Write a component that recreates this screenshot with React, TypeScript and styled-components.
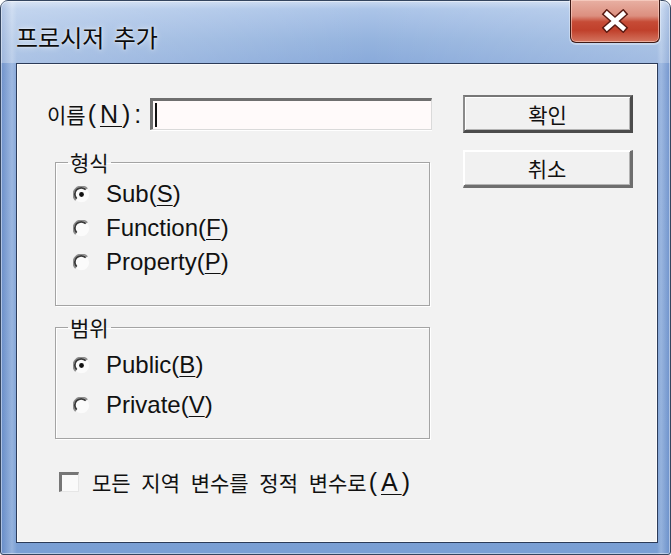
import styled, { createGlobalStyle } from "styled-components";

const KO = `"Noto Sans CJK KR", "Liberation Sans", sans-serif`;
const LATIN = `"Liberation Sans", "Noto Sans CJK KR", sans-serif`;

const GlobalStyle = createGlobalStyle`
  html, body {
    margin: 0;
    padding: 0;
    background: #ffffff;
  }
  body {
    width: 671px;
    height: 555px;
    overflow: hidden;
  }
`;

type RadioProps = { checked?: boolean };

/**
 * 클래식 윈도우 라디오 버튼 모양
 */
const RadioMark: React.FC<RadioProps> = ({ checked }) => (
  <svg width="17" height="17" viewBox="0 0 12 12">
    <circle cx="6" cy="6" r="5.4" fill="#fbfbfb" />
    <path d="M1.9 10.1 A5.6 5.6 0 0 1 10.1 1.9" stroke="#8e8e8e" strokeWidth="1.1" fill="none" />
    <path d="M2.6 9.0 A4.5 4.5 0 0 1 9.0 2.6" stroke="#3a3a3a" strokeWidth="1.3" fill="none" />
    {checked && <circle cx="6" cy="6" r="1.7" fill="#111" />}
  </svg>
);

const CloseGlyph = () => (
  <svg width="30" height="24" viewBox="0 0 30 24">
    <path d="M7 5 L23 19 M23 5 L7 19" stroke="#5a1a12" strokeWidth="7.5" strokeLinecap="square" />
    <path d="M7 5 L23 19 M23 5 L7 19" stroke="#ffffff" strokeWidth="4.5" strokeLinecap="square" />
  </svg>
);

export default function App() {
  return (
    <>
      <GlobalStyle />
      <Window>
        <TitleBar>
          <Title>프로시저 추가</Title>
          <CloseButton aria-label="닫기">
            <CloseGlyph />
          </CloseButton>
        </TitleBar>
        <Client>
          <LeftColumn>
            <NameRow>
              <Label>
                <Ko>이름</Ko>
                <Latin>
                  (<Mnemonic>N</Mnemonic>):
                </Latin>
              </Label>
              <NameInput>
                <Caret />
              </NameInput>
            </NameRow>

            <Group $pad="2px 0 26px 0">
              <GroupLegend>형식</GroupLegend>
              <OptionList>
                <OptionRow $pitch={34}>
                  <RadioMark checked />
                  <OptionText>
                    Sub(<Mnemonic>S</Mnemonic>)
                  </OptionText>
                </OptionRow>
                <OptionRow $pitch={34}>
                  <RadioMark />
                  <OptionText>
                    Function(<Mnemonic>F</Mnemonic>)
                  </OptionText>
                </OptionRow>
                <OptionRow $pitch={34}>
                  <RadioMark />
                  <OptionText>
                    Property(<Mnemonic>P</Mnemonic>)
                  </OptionText>
                </OptionRow>
              </OptionList>
            </Group>

            <Group $pad="5px 0 13px 0" $gap={8}>
              <GroupLegend>범위</GroupLegend>
              <OptionList>
                <OptionRow $pitch={40}>
                  <RadioMark checked />
                  <OptionText>
                    Public(<Mnemonic>B</Mnemonic>)
                  </OptionText>
                </OptionRow>
                <OptionRow $pitch={40}>
                  <RadioMark />
                  <OptionText>
                    Private(<Mnemonic>V</Mnemonic>)
                  </OptionText>
                </OptionRow>
              </OptionList>
            </Group>

            <CheckRow>
              <CheckBox />
              <CheckText>
                <Ko>모든 지역 변수를 정적 변수로</Ko>
                <Latin>
                  (<Mnemonic>A</Mnemonic>)
                </Latin>
              </CheckText>
            </CheckRow>
          </LeftColumn>

          <ButtonColumn>
            <DialogButton $default>확인</DialogButton>
            <DialogButton>취소</DialogButton>
          </ButtonColumn>
        </Client>
      </Window>
    </>
  );
}

const Window = styled.div`
  box-sizing: border-box;
  width: 671px;
  height: 555px;
  display: flex;
  flex-direction: column;
  padding: 0 12px 11px 15px;
  border: 1px solid #34455f;
  border-radius: 8px 8px 3px 3px;
  background:
    linear-gradient(90deg, rgba(40, 80, 160, 0.25) 0, rgba(255, 255, 255, 0.2) 11px, rgba(255, 255, 255, 0) 16px),
    linear-gradient(270deg, rgba(40, 80, 160, 0.2) 0, rgba(255, 255, 255, 0.2) 9px, rgba(255, 255, 255, 0) 13px),
    linear-gradient(180deg, #c9d9f0 0, #abc4e8 8px, #94b3de 40px, #86a7d9 70px, #7a9fd4 100%);
  box-shadow: inset 0 0 0 1px rgba(255, 255, 255, 0.45);
`;

const TitleBar = styled.div`
  height: 62px;
  display: flex;
  justify-content: space-between;
  align-items: flex-start;
  margin: 0 -12px 0 -15px;
  padding: 0 11px 0 15px;
  background: linear-gradient(
    90deg,
    rgba(255, 255, 255, 0.3) 0,
    rgba(255, 255, 255, 0.14) 30%,
    rgba(255, 255, 255, 0) 55%,
    rgba(255, 255, 255, 0.1) 75%,
    rgba(255, 255, 255, 0.22) 100%
  );
`;

const Title = styled.div`
  padding: 21px 0 0 0;
  font-family: ${KO};
  font-size: 24px;
  line-height: 30px;
  word-spacing: 4px;
  color: #0c0c0c;
  text-shadow: 0 0 6px rgba(255, 255, 255, 0.8), 0 0 2px rgba(255, 255, 255, 0.8);
`;

const CloseButton = styled.button`
  box-sizing: border-box;
  width: 90px;
  height: 43px;
  margin-top: -1px;
  margin-right: -1px;
  padding: 0;
  display: flex;
  align-items: center;
  justify-content: center;
  border: 1px solid #3e1a16;
  border-top: none;
  border-radius: 0 0 6px 6px;
  background: linear-gradient(
    180deg,
    #e8b0a3 0,
    #dc8f7f 38%,
    #c64b36 52%,
    #c0402b 72%,
    #d47560 100%
  );
  box-shadow: inset 0 0 0 1px rgba(255, 220, 210, 0.55), 0 1px 0 1px rgba(255, 255, 255, 0.35);
`;

const Client = styled.div`
  flex: 1;
  display: flex;
  align-items: flex-start;
  background: #f2f2f2;
  border: 1px solid #2c3b58;
  box-shadow: inset 0 0 0 1px #fbfbfb;
`;

const LeftColumn = styled.div`
  width: 385px;
  margin-left: 30px;
  padding-top: 34px;
  display: flex;
  flex-direction: column;
`;

const ButtonColumn = styled.div`
  margin-left: 31px;
  padding-top: 31px;
  display: flex;
  flex-direction: column;
  gap: 17px;
`;

const NameRow = styled.div`
  height: 32px;
  display: flex;
  align-items: center;
`;

const Label = styled.div`
  width: 103px;
  color: #111;
  white-space: nowrap;
`;

const Ko = styled.span`
  font-family: ${KO};
  font-size: 21px;
  word-spacing: 6px;
`;

/* 한글 라벨 안의 영문 부분: 원본 글꼴처럼 넓게 */
const Latin = styled.span`
  font-family: ${LATIN};
  font-size: 25px;
  letter-spacing: 4px;
  margin-left: 2px;
`;

const Mnemonic = styled.u`
  text-decoration-thickness: 1px;
  text-underline-offset: 3px;
`;

const NameInput = styled.div`
  box-sizing: border-box;
  width: 282px;
  height: 32px;
  display: flex;
  align-items: center;
  padding-left: 2px;
  background: #fffafa;
  border-style: solid;
  border-width: 3px 1px 1px 3px;
  border-color: #6f6f6f #dadada #dadada #6f6f6f;
  box-shadow: 0 1px 0 #ffffff;
`;

const Caret = styled.span`
  width: 2px;
  height: 24px;
  background: #111;
`;

const Group = styled.fieldset<{ $pad: string; $gap?: number }>`
  box-sizing: border-box;
  width: 375px;
  min-width: 0;
  margin: ${({ $gap }) => ($gap ?? 19)}px 0 0 8px;
  padding: ${({ $pad }) => $pad};
  border: 1px solid #a4a4a4;
  box-shadow: 1px 1px 0 #ffffff, inset 1px 1px 0 #ffffff;
`;

const GroupLegend = styled.legend`
  margin-left: 12px;
  padding: 0 2px;
  font-family: ${KO};
  font-size: 21px;
  line-height: 26px;
  color: #111;
`;

const OptionList = styled.div`
  display: flex;
  flex-direction: column;
  padding-left: 17px;
`;

const OptionRow = styled.div<{ $pitch: number }>`
  height: ${({ $pitch }) => $pitch}px;
  display: flex;
  align-items: center;
  gap: 16px;
`;

const OptionText = styled.span`
  font-family: ${LATIN};
  font-size: 24px;
  line-height: 28px;
  color: #111;
`;

const CheckRow = styled.div`
  height: 24px;
  margin-top: 31px;
  margin-left: 12px;
  display: flex;
  align-items: center;
  gap: 13px;
`;

const CheckBox = styled.span`
  box-sizing: border-box;
  width: 20px;
  height: 20px;
  background: #fafafa;
  border-style: solid;
  border-width: 3px 1px 1px 3px;
  border-color: #777777 #e6e6e6 #e6e6e6 #777777;
`;

const CheckText = styled.span`
  color: #111;
  white-space: nowrap;
`;

const DialogButton = styled.button<{ $default?: boolean }>`
  box-sizing: border-box;
  width: 170px;
  height: 38px;
  padding: 0;
  font-family: ${KO};
  font-size: 21px;
  color: #111;
  background: #f1f1f1;
  border-style: solid;
  border-width: ${({ $default }) => ($default ? "2px 3px 3px 2px" : "1px 3px 3px 1px")};
  border-color: ${({ $default }) =>
    $default ? "#777777 #4c4c4c #4c4c4c #8a8a8a" : "#ffffff #6e6e6e #6e6e6e #ffffff"};
  box-shadow: inset 1px 1px 0 #ffffff, inset -1px -1px 0 #b4b4b4;
`;
